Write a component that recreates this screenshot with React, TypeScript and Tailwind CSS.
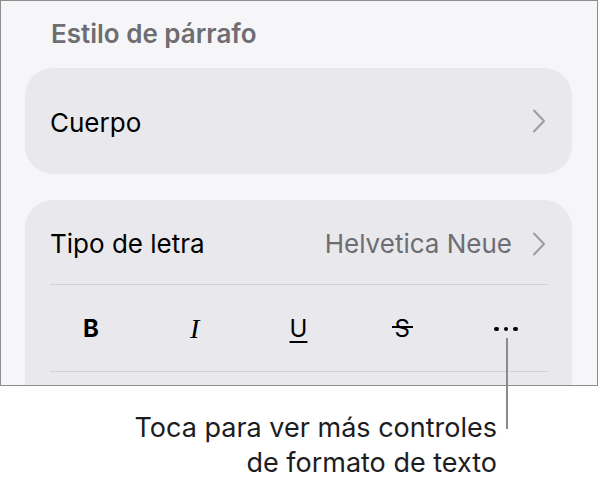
import React from "react";

function Chevron() {
  return (
    <svg width="14" height="24" viewBox="0 0 14 24" fill="none" className="shrink-0">
      <path d="M2 1.5 L12 12 L2 22.5" stroke="#9c9ca1" strokeWidth="2" strokeLinecap="round" strokeLinejoin="round" />
    </svg>
  );
}

function FormatButtons() {
  return (
    <div className="flex h-[86px] items-center justify-between px-[21px] pt-[2px]">
      <span className="flex w-[40px] justify-center text-[24px] font-bold text-black">B</span>
      <span className="flex w-[40px] justify-center font-['Liberation_Serif',serif] text-[28px] italic text-black">I</span>
      <span className="flex w-[40px] justify-center text-[24px] text-black underline decoration-[1.5px] underline-offset-[4px]">U</span>
      <span className="flex w-[40px] justify-center">
        <span className="relative text-[24px] text-black">
          S
          <span className="absolute left-[-3px] right-[-3px] top-[15px] h-[1.5px] bg-black" />
        </span>
      </span>
      <span className="flex w-[40px] items-center justify-center gap-[5px]">
        <span className="h-[4.5px] w-[4.5px] rounded-full bg-black" />
        <span className="h-[4.5px] w-[4.5px] rounded-full bg-black" />
        <span className="h-[4.5px] w-[4.5px] rounded-full bg-black" />
      </span>
    </div>
  );
}

export default function App() {
  return (
    <div className="relative h-[481px] w-[599px] overflow-hidden bg-white font-['Inter',sans-serif] text-[#1c1c1e]">
      <div className="h-[386px] w-[598px] overflow-hidden border border-[#8e8e8e] bg-[#f6f6f8] pt-[17px]">
        <div className="pl-[50px] text-[26px] font-semibold leading-[32px] text-[#6d6d72]">
          Estilo de párrafo
        </div>

        <div className="ml-[24px] mt-[18px] flex h-[106px] w-[547px] items-center justify-between rounded-[28px] bg-[#e9e8ed] pl-[25px] pr-[26px]">
          <span className="pt-[3px] text-[26px] leading-[32px] text-black">Cuerpo</span>
          <Chevron />
        </div>

        <div className="ml-[24px] mt-[26px] w-[547px] rounded-t-[28px] bg-[#e9e8ed] px-[25px] pb-[40px]">
          <div className="flex h-[84px] items-center justify-between pt-[4px]">
            <span className="text-[26px] leading-[32px] text-black">Tipo de letra</span>
            <div className="flex items-center gap-[20px] pr-[1px]">
              <span className="text-[26px] leading-[32px] text-[#6d6d72]">Helvetica Neue</span>
              <Chevron />
            </div>
          </div>
          <div className="h-px bg-[#d1d1d6]" />
          <FormatButtons />
          <div className="h-px bg-[#d1d1d6]" />
        </div>
      </div>

      <div className="absolute left-[506px] top-[338px] h-[91px] w-[1.5px] bg-[#8a8a8a]" />

      <div className="mt-[24px] pr-[102px] text-right text-[27px] leading-[35px] text-[#1d1d1f]">
        <div>Toca para ver más controles</div>
        <div>de formato de texto</div>
      </div>
    </div>
  );
}
